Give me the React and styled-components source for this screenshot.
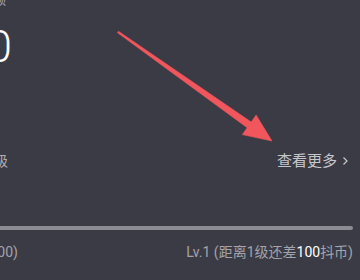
import React from 'react';
import styled, { createGlobalStyle } from 'styled-components';

const GlobalStyle = createGlobalStyle`
    html, body {
        margin: 0;
        padding: 0;
        background: #3b3b45;
    }
    body {
        font-family: Roboto, "Noto Sans CJK SC", sans-serif;
    }
`;

const Screen = styled.div`
    position: relative;
    width: 360px;
    height: 280px;
    overflow: hidden;
    background: #3b3b45;
`;

const Card = styled.div`
    display: flex;
    flex-direction: column;
    margin-left: -20px;
    margin-top: -7px;
    width: 373px;
`;

const Label = styled.div`
    font-size: 13px;
    line-height: 14px;
    color: #a9a9b1;
`;

const Amount = styled.div`
    margin-top: 14px;
    margin-left: 7px;
    font-family: Roboto, sans-serif;
    font-weight: 300;
    font-size: 45px;
    line-height: 52px;
    color: #ffffff;
`;

const Row = styled.div`
    display: flex;
    justify-content: space-between;
    align-items: center;
    margin-top: ${p => p.top || 0}px;
`;

const RowText = styled.span`
    font-size: 14px;
    line-height: 18px;
    color: #adadb5;
`;

const MoreLink = styled.span`
    display: flex;
    align-items: center;
    gap: 5px;
    margin-right: 4px;
    font-size: 15px;
    line-height: 18px;
    color: #c6c6cc;
`;

const Bar = styled.div`
    margin-top: 56px;
    height: 4px;
    border-radius: 2px;
    background: #8b8b93;
`;

const Note = styled.span`
    margin-left: ${p => p.shift || 0}px;
    font-size: 14px;
    line-height: 18px;
    color: #a3a3ab;

    b {
        font-weight: 400;
        color: #ffffff;
    }
`;

const ArrowLayer = styled.svg`
    position: absolute;
    left: 0;
    top: 0;
    pointer-events: none;
`;

const Chevron = () => (
    <svg width="7" height="10" viewBox="0 0 7 10">
        <path d="M1.5 1.5 L5 5 L1.5 8.5" fill="none" stroke="#c6c6cc" strokeWidth="1.2" />
    </svg>
);

export default function App() {
    return (
        <>
            <GlobalStyle />
            <Screen>
                <Card>
                    <Label>余额</Label>
                    <Amount>0</Amount>
                    <Row top={79}>
                        <RowText>等级</RowText>
                        <MoreLink>
                            查看更多
                            <Chevron />
                        </MoreLink>
                    </Row>
                    <Bar />
                    <Row top={13}>
                        <Note shift={-9}>(0/100)</Note>
                        <Note>
                            Lv.1 (距离1级还差<b>100</b>抖币)
                        </Note>
                    </Row>
                </Card>
                <ArrowLayer width="360" height="280" viewBox="0 0 360 280">
                    <polygon
                        points="117.5,32.7 247.2,127.7 242.3,134.6 272,141 256.1,115 251.2,122 118.5,31.3"
                        fill="#f0565c"
                        stroke="#f0565c"
                        strokeWidth="0.6"
                        strokeLinejoin="round"
                    />
                </ArrowLayer>
            </Screen>
        </>
    );
}
